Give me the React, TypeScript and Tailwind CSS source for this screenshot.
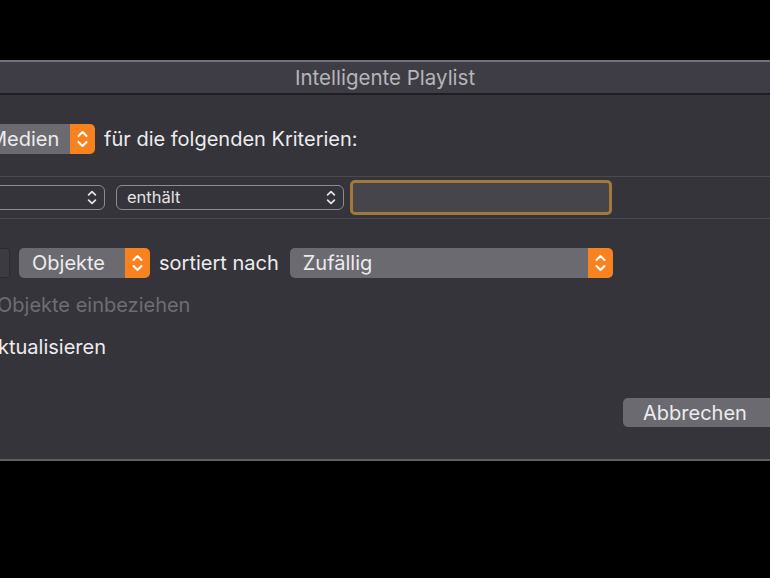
import React from "react";

const font = { fontFamily: "Inter, 'Noto Sans', sans-serif" };

function Chevrons({ className = "" }: { className?: string }) {
    return (
        <svg width="11" height="20" viewBox="0 0 11 20" className={className} fill="none" stroke="currentColor" strokeWidth="2" strokeLinecap="round" strokeLinejoin="round">
            <path d="M1.5 7 L5.5 3 L9.5 7" />
            <path d="M1.5 13 L5.5 17 L9.5 13" />
        </svg>
    );
}

function FilledPopup({ label, className = "" }: { label: string; className?: string }) {
    return (
        <div className={`flex h-[30px] items-stretch overflow-hidden rounded-[5px] ${className}`}>
            <div className="flex flex-1 items-center bg-[#6b6a70] pl-[13px] text-[#ececee]">{label}</div>
            <div className="flex w-[25px] items-center justify-center bg-[#f7821f] text-white">
                <Chevrons />
            </div>
        </div>
    );
}

function OutlinePopup({ label, className = "" }: { label: string; className?: string }) {
    return (
        <div className={`flex h-[25px] items-center justify-between rounded-[6px] border border-[#8c8b91] pl-[10px] pr-[7px] text-[16.5px] text-[#e4e4e6] ${className}`}>
            <span>{label}</span>
            <Chevrons className="h-[17px] w-[10px]" />
        </div>
    );
}

export default function App() {
    return (
        <div className="h-[578px] w-[770px] overflow-hidden bg-black pt-[60px] text-[20px]" style={font}>
            <div className="border-t-2 border-b-2 border-t-[#707075] border-b-[#5f5e63] bg-[#35343b]">
                {/* Title */}
                <div className="flex h-[33px] items-center justify-center border-b-2 border-[#1f1e23] bg-[#3e3d45] pt-[2px] text-[20.5px] text-[#b6b5ba]">
                    Intelligente Playlist
                </div>

                {/* Match row */}
                <div className="flex h-[81px] items-center pt-[7px]">
                    <FilledPopup label="Medien" className="-ml-[24px] w-[119px]" />
                    <span className="ml-[9px] text-[#ececee]">für die folgenden Kriterien:</span>
                </div>

                {/* Rule row */}
                <div className="flex h-[43px] items-center gap-[11px] border-y border-[#4a4950]">
                    <OutlinePopup label="" className="-ml-[10px] w-[115px]" />
                    <OutlinePopup label="enthält" className="w-[228px]" />
                    <div className="ml-[-5px] h-[35px] w-[262px] rounded-[5px] border-[3px] border-[#a4773b] bg-[#46454c]" />
                </div>

                {/* Limit row */}
                <div className="mt-[29px] flex h-[30px] items-center">
                    <div className="-ml-[10px] h-[30px] w-[20px] rounded-[3px] border border-[#2c2b31] bg-[#3c3b42]" />
                    <FilledPopup label="Objekte" className="ml-[9px] w-[131px]" />
                    <span className="ml-[9px] text-[#ececee]">sortiert nach</span>
                    <FilledPopup label="Zufällig" className="ml-[11px] w-[323px]" />
                </div>

                <div className="mt-[16px] -ml-[3px] h-[22px] leading-[22px] text-[#6e6d73]">Objekte einbeziehen</div>
                <div className="mt-[20px] -ml-[2px] h-[22px] leading-[22px] text-[#ececee]">ktualisieren</div>

                <div className="flex justify-end pt-[40px] pb-[32px]">
                    <div className="-mr-[10px] flex h-[29px] w-[157px] items-center rounded-[5px] bg-[#6b6a70] pl-[20px] text-[#ececee]">
                        Abbrechen
                    </div>
                </div>
            </div>
        </div>
    );
}
